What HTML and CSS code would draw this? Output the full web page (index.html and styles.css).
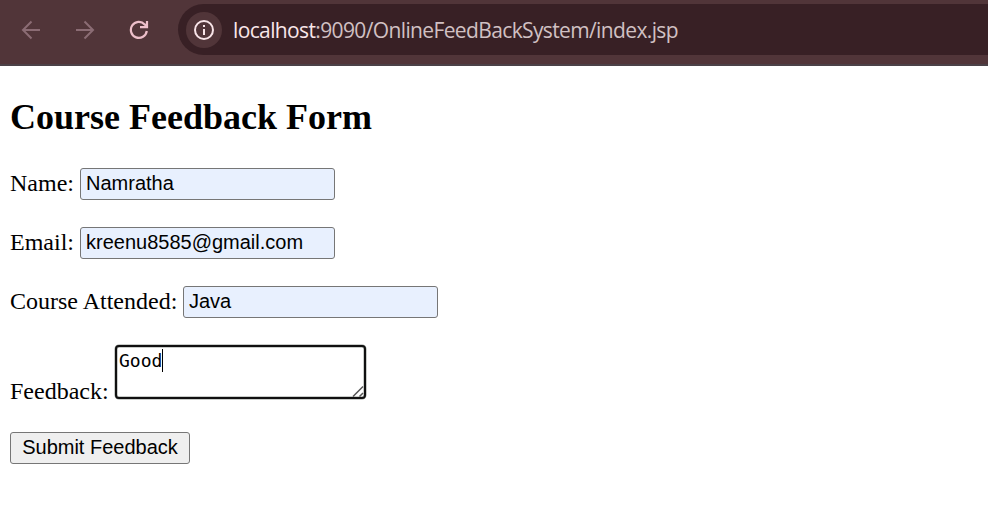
FILE: index.html
```html
<!DOCTYPE html>
<html lang="en">
<head>
<meta charset="utf-8">
<title>Course Feedback Form</title>
<link rel="stylesheet" href="styles.css">
</head>
<body>
<header class="toolbar">
  <svg class="nav-icon" viewBox="0 0 20 20"><path d="M19 10H2M10.500 1.500 2 10l8.500 8.500"/></svg>
  <svg class="nav-icon" viewBox="0 0 20 20"><path d="M1 10h17M9.500 1.500 18 10l-8.500 8.500"/></svg>
  <svg class="nav-icon reload" viewBox="0 0 20 20"><path d="M17.800 11A8 8 0 1 1 15.700 4.400L18 6.500M18 1v6.200h-7"/></svg>
  <div class="address">
    <span class="info">
      <svg viewBox="0 0 20 20"><circle cx="10" cy="10" r="9"/><path d="M10 9v6M10 5v2"/></svg>
    </span>
    <span class="url"><span class="host">localhost</span>:9090/OnlineFeedBackSystem/index.jsp</span>
  </div>
</header>
<main>
  <h2>Course Feedback Form</h2>
  <form>
    <div class="row"><label for="name">Name:</label><input id="name" type="text" value="Namratha"></div>
    <div class="row"><label for="email">Email:</label><input id="email" type="text" value="kreenu8585@gmail.com"></div>
    <div class="row"><label class="course" for="course">Course Attended:</label><input id="course" type="text" value="Java"></div>
    <div class="row feedback">
      <label for="feedback">Feedback:</label>
      <div class="area">
        <textarea id="feedback">Good</textarea>
        <span class="caret"></span>
        <svg class="grip" viewBox="0 0 12 12"><path d="M1 11.500 11 1.500M7.500 11.500l3.500-3.500"/></svg>
      </div>
    </div>
    <button type="button">Submit Feedback</button>
  </form>
</main>
</body>
</html>
```
FILE: styles.css
```css
* { box-sizing: border-box; }
body {
  margin: 0;
  background: #fff;
  color: #000;
  font: 24px/30px "Liberation Serif", "Times New Roman", serif;
  overflow: hidden;
}
.toolbar {
  display: flex;
  height: 66px;
  padding: 4px 0 0 21px;
  background: #513539;
  border-bottom: 2px solid #4b4147;
}
.nav-icon {
  flex: none;
  width: 20px;
  height: 20px;
  margin: 16px 34px 0 0;
  fill: none;
  stroke: #8b6c74;
  stroke-width: 2;
}
.reload {
  margin-right: 29px;
  stroke: #edbfca;
  stroke-width: 2.200;
}
.address {
  display: flex;
  align-items: center;
  flex: 1;
  height: 51px;
  padding-left: 8px;
  background: #382025;
  border-radius: 26px 0 0 26px;
}
.info {
  display: flex;
  align-items: center;
  justify-content: center;
  width: 36px;
  height: 36px;
  border-radius: 50%;
  background: #513539;
}
.info svg {
  width: 20px;
  height: 20px;
  fill: none;
  stroke: #f8e4e8;
  stroke-width: 2;
}
.url {
  margin-left: 11px;
  color: #d1c0c3;
  font: 21px/28px "Open Sans", "Noto Sans", sans-serif;
  letter-spacing: -0.630px;
  white-space: nowrap;
}
.host { color: #f8e6e9; }
main { padding: 31px 10px 0; }
h2 {
  margin: 0 0 30px;
  font-size: 36px;
  line-height: 41px;
}
.row {
  display: flex;
  height: 32px;
  margin-bottom: 27px;
}
.row label {
  width: 70px;
  white-space: nowrap;
}
.row .course { width: 173px; }
input {
  width: 255px;
  height: 32px;
  padding: 0 5px 2px;
  border: 1px solid #767676;
  border-radius: 3px;
  background: #e8f0fe;
  color: #000;
  font: 20px "Liberation Sans", Arial, sans-serif;
}
.feedback {
  height: 54px;
  margin-bottom: 33px;
}
.feedback label {
  width: 104px;
  padding-top: 31px;
}
.area {
  position: relative;
  width: 253px;
  height: 54px;
  padding: 0 0 0 1px;
}
textarea {
  display: block;
  width: 251px;
  height: 54px;
  margin: 0;
  padding: 2px;
  border: 2px solid #101010;
  box-shadow: 0 0 0 0.500px #949a94, inset 0 0 0 0.500px #949a94;
  outline: none;
  border-radius: 4px;
  resize: none;
  overflow: hidden;
  color: #000;
  font: 18px/23px "DejaVu Sans Mono", monospace;
}
.caret {
  position: absolute;
  left: 48px;
  top: 4px;
  width: 1px;
  height: 23px;
  background: #000;
}
.grip {
  position: absolute;
  right: 3px;
  bottom: 2px;
  width: 12px;
  height: 12px;
  fill: none;
  stroke: #555;
  stroke-width: 1.500;
}
button {
  display: block;
  width: 180px;
  height: 32px;
  padding: 0 0 2px;
  border: 1px solid #767676;
  border-radius: 3px;
  background: #efefef;
  color: #000;
  font: 20px "Liberation Sans", Arial, sans-serif;
}
```
